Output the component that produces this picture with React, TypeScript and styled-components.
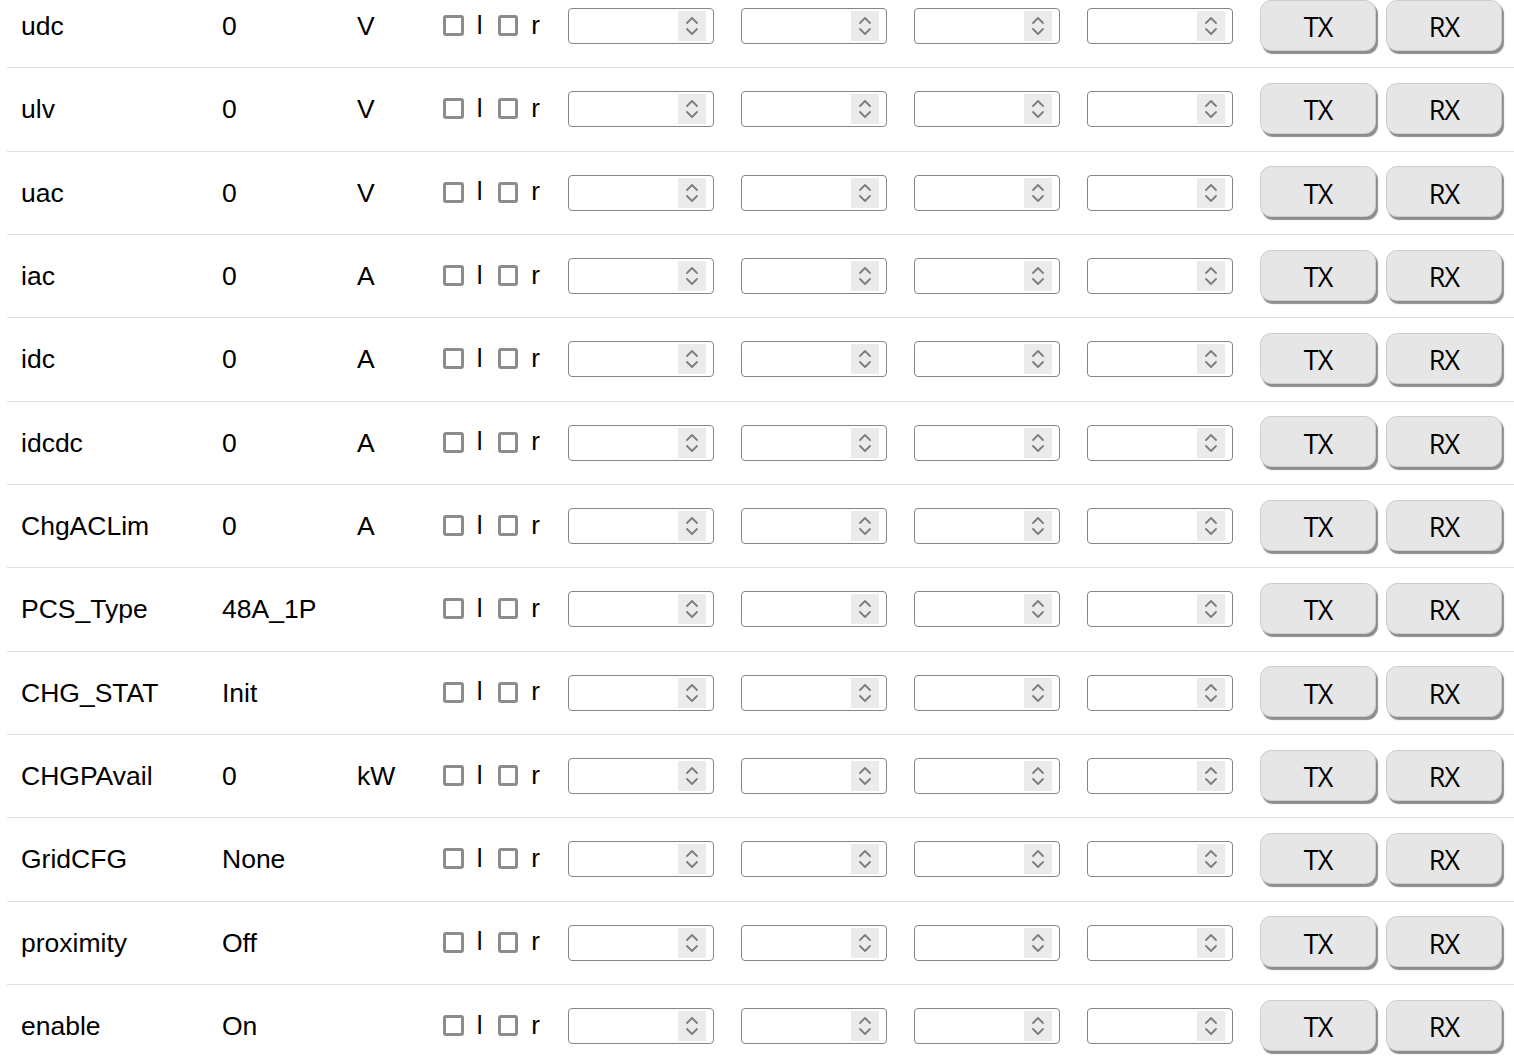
import React from "react";
import styled, { createGlobalStyle } from "styled-components";

const GlobalStyle = createGlobalStyle`
  html, body { margin: 0; padding: 0; background: #ffffff; }
  body {
    font-family: "Liberation Sans", Arial, sans-serif;
    color: #000000;
    overflow: hidden;
  }
  * { box-sizing: border-box; }
`;

const Table = styled.div`
  margin: -15px 0 0 7px;
  display: flex;
  flex-direction: column;
`;

const Row = styled.div`
  display: grid;
  grid-template-columns: 201px 135px 86px 125px repeat(4, 173px) 1fr;
  align-items: center;
  height: 83.33px;
  border-bottom: 1px solid #dedede;
`;

const Cell = styled.div`
  padding: 0 14px;
  font-size: 26.5px;
  line-height: 30px;
  white-space: nowrap;
`;

const CheckCell = styled(Cell)`
  display: flex;
  align-items: center;
  padding-bottom: 1px;
`;

const Check = styled.input.attrs({ type: "checkbox" })`
  appearance: none;
  -webkit-appearance: none;
  margin: 0 13px 0 0;
  width: 21px;
  height: 21px;
  border: 3px solid #8b8b90;
  border-radius: 3px;
  background: #ffffff;
`;

const CheckLabel = styled.span<{ $gap: number }>`
  margin-right: ${(p) => p.$gap}px;
  font-size: 26px;
  line-height: 26px;
  margin-top: -2px;
`;

const NumberBox = styled.div`
  display: flex;
  align-items: center;
  width: 146px;
  height: 36px;
  border: 1px solid #858585;
  border-radius: 4px;
  background: #ffffff;
  padding: 2px 7px 2px 2px;
`;

const NumberInput = styled.input`
  flex: 1;
  min-width: 0;
  height: 100%;
  border: none;
  outline: none;
  background: transparent;
  font-family: "Liberation Sans", Arial, sans-serif;
  font-size: 20px;
`;

const Spinner = styled.div`
  width: 28px;
  height: 30px;
  background: #ebebeb;
  display: flex;
  align-items: center;
  justify-content: center;
`;

const ButtonCell = styled(Cell)`
  display: flex;
  gap: 10px;
  padding-bottom: 2px;
`;

const ActionButton = styled.button`
  width: 116px;
  height: 51px;
  border: 1px solid #cdcdcd;
  border-radius: 11px;
  background: #e6e6e6;
  box-shadow: 2px 3px 1px rgba(0, 0, 0, 0.45);
  font-family: "Open Sans", "Noto Sans", sans-serif;
  font-size: 27px;
  letter-spacing: -1px;
  line-height: 30px;
  color: #000000;
  padding: 4px 0 0 0;
  cursor: pointer;
`;

const SpinIcon = () => (
  <svg width="14" height="24" viewBox="0 0 14 24" fill="none">
    <polyline points="2,9 7,4 12,9" stroke="#7d7d7d" strokeWidth="1.8" strokeLinecap="round" strokeLinejoin="round" />
    <polyline points="2,15 7,20 12,15" stroke="#7d7d7d" strokeWidth="1.8" strokeLinecap="round" strokeLinejoin="round" />
  </svg>
);

const NumberField = () => (
  <NumberBox>
    <NumberInput type="text" />
    <Spinner>
      <SpinIcon />
    </Spinner>
  </NumberBox>
);

const rows: [string, string, string][] = [
  ["udc", "0", "V"],
  ["ulv", "0", "V"],
  ["uac", "0", "V"],
  ["iac", "0", "A"],
  ["idc", "0", "A"],
  ["idcdc", "0", "A"],
  ["ChgACLim", "0", "A"],
  ["PCS_Type", "48A_1P", ""],
  ["CHG_STAT", "Init", ""],
  ["CHGPAvail", "0", "kW"],
  ["GridCFG", "None", ""],
  ["proximity", "Off", ""],
  ["enable", "On", ""],
];

export default function App() {
  return (
    <>
      <GlobalStyle />
      <Table>
        {rows.map(([name, value, unit]) => (
          <Row key={name}>
            <Cell>{name}</Cell>
            <Cell>{value}</Cell>
            <Cell>{unit}</Cell>
            <CheckCell>
              <Check />
              <CheckLabel $gap={15}>l</CheckLabel>
              <Check />
              <CheckLabel $gap={0}>r</CheckLabel>
            </CheckCell>
            {[0, 1, 2, 3].map((i) => (
              <Cell key={i}>
                <NumberField />
              </Cell>
            ))}
            <ButtonCell>
              <ActionButton>TX</ActionButton>
              <ActionButton>RX</ActionButton>
            </ButtonCell>
          </Row>
        ))}
      </Table>
    </>
  );
}
